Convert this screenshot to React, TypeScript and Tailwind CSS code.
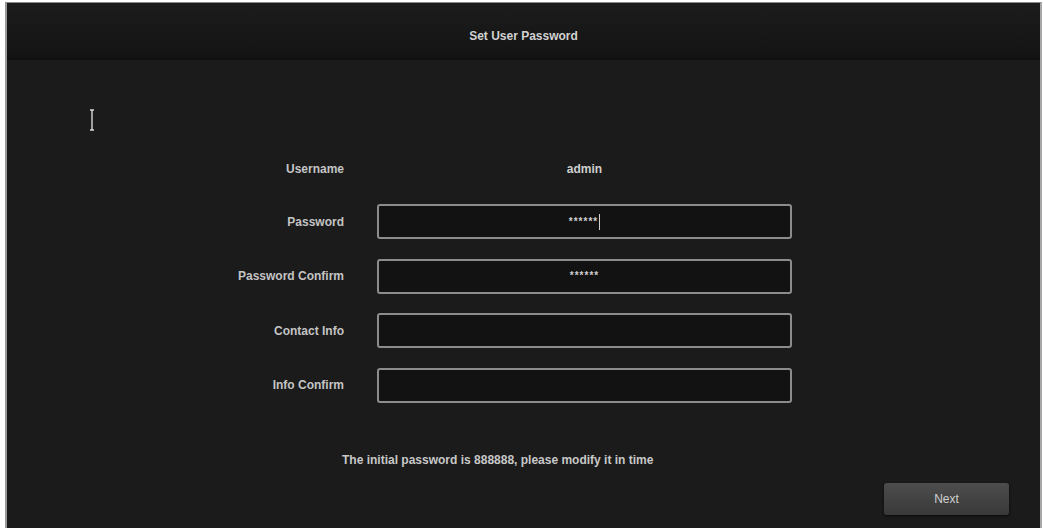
import { useState } from "react";

type Row = { label: string; value: string; caret?: boolean };

const rows: Row[] = [
  { label: "Password", value: "******", caret: true },
  { label: "Password Confirm", value: "******" },
  { label: "Contact Info", value: "" },
  { label: "Info Confirm", value: "" },
];

const font = "font-['Liberation_Sans_Narrow','Liberation_Sans',Arial,sans-serif]";

export default function App() {
  const [values] = useState(rows);

  return (
    <div className="h-[528px] w-[1043px] bg-white pl-[5px] pr-[1px] pt-[2px]">
      <div className={`relative flex h-full flex-col border-l-2 border-r-2 border-t border-l-[#9a9a9a] border-r-[#a8a8a8] border-t-[#8a8a8a] bg-[#1b1b1b] ${font}`}>
        <div className="flex h-[57px] items-center justify-center border-b-[3px] border-b-[#111] bg-gradient-to-b from-[#1c1c1c] to-[#141414] pt-[11px]">
          <span className="text-[12px] font-bold text-[#d2d2d2]">Set User Password</span>
        </div>

        <svg className="absolute left-[81px] top-[106px]" width="8" height="22" viewBox="0 0 8 22" aria-hidden>
          <path d="M2 1h4M4 1v20M2 21h4" stroke="#d8d8d8" strokeWidth="1.4" fill="none" />
        </svg>

        <div className="mt-[91px] flex h-[35px] items-center">
          <div className="w-[337px] text-right text-[12px] font-bold text-[#c4c4c4]">Username</div>
          <div className="ml-[33px] w-[415px] text-center text-[12px] font-bold text-[#cfcfcf]">admin</div>
        </div>

        <div className="mt-[18px] flex flex-col gap-[19.5px]">
          {values.map((r) => (
            <div key={r.label} className="flex h-[35px] items-center">
              <div className="w-[337px] text-right text-[12px] font-bold text-[#c4c4c4]">{r.label}</div>
              <div className="ml-[33px] flex h-[35px] w-[415px] items-center justify-center rounded-[3px] border-2 border-[#8c8c8c] bg-[#121212]">
                <span className="text-[10px] font-bold leading-none tracking-[1px] text-[#cfcfcf]">{r.value}</span>
                {r.caret && <span className="ml-px h-[16px] w-px bg-[#d0d0d0]" />}
              </div>
            </div>
          ))}
        </div>

        <div className="mt-[48px] pl-[335px] text-[12px] font-bold text-[#c8c8c8]">
          The initial password is 888888, please modify it in time
        </div>

        <div className="mt-[14px] flex justify-end pr-[31px]">
          <button className="h-[32px] w-[125px] rounded-[3px] bg-gradient-to-b from-[#4d4d4d] to-[#393939] text-[12px] text-[#cfcfcf] shadow-[0_1px_3px_rgba(0,0,0,0.7)]">
            Next
          </button>
        </div>
      </div>
    </div>
  );
}
